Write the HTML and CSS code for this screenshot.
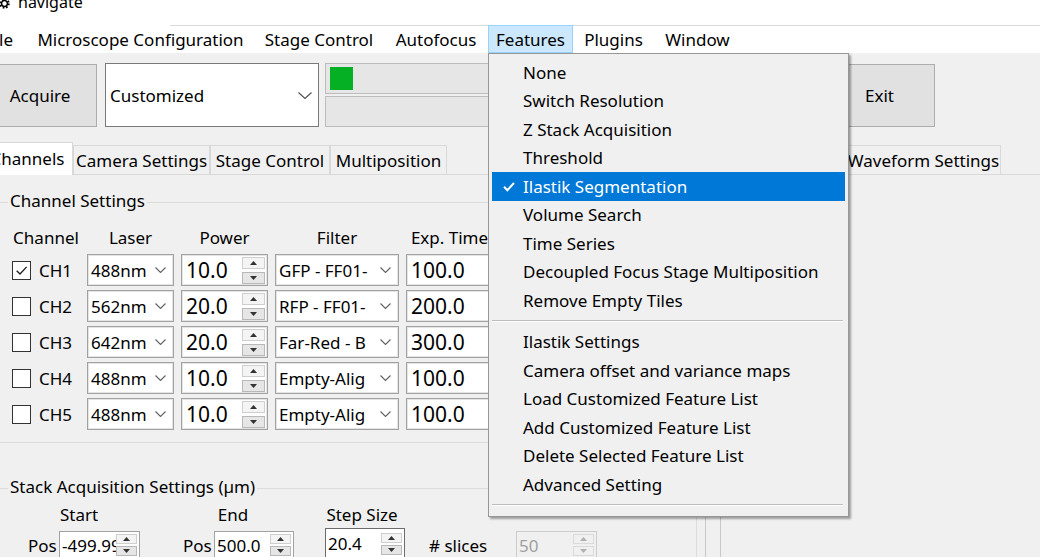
FILE: index.html
```html
<!DOCTYPE html>
<html lang="en">
<head>
<meta charset="utf-8">
<title>navigate</title>
<link rel="stylesheet" href="styles.css">
</head>
<body>
<header class="titlebar">
  <svg class="app-icon" viewBox="0 0 12 12" aria-hidden="true">
    <circle cx="6" cy="6" r="4.6" fill="none" stroke="#000" stroke-width="2.2" stroke-dasharray="1.8 1.8"/>
    <circle cx="6" cy="6" r="3.2" fill="none" stroke="#000" stroke-width="1.6"/>
  </svg>
  <span class="app-name">navigate</span>
</header>

<nav class="menubar">
  <span class="menu-title w-file">File</span>
  <span class="menu-title w-micro">Microscope Configuration</span>
  <span class="menu-title w-stage">Stage Control</span>
  <span class="menu-title w-auto">Autofocus</span>
  <span class="menu-title w-feat open">Features</span>
  <span class="menu-title w-plug">Plugins</span>
  <span class="menu-title w-win">Window</span>
</nav>

<section class="toolbar">
  <button class="btn btn-acquire">Acquire</button>
  <div class="combo combo-mode">
    <span class="combo-text">Customized</span>
    <svg class="chev chev-lg" viewBox="0 0 14 7" aria-hidden="true"><path d="M0.5 0.5 L7 6.5 L13.5 0.5" fill="none" stroke="#555" stroke-width="1.2"/></svg>
  </div>
  <div class="progress">
    <div class="pbar"><span class="pfill"></span></div>
    <div class="pbar"></div>
  </div>
  <button class="btn btn-exit">Exit</button>
</section>

<main class="workspace">
  <div class="notebook nb-left">
    <div class="tabs">
      <span class="tab selected w-channels">Channels</span>
      <span class="tab w-camset">Camera Settings</span>
      <span class="tab w-stagectl">Stage Control</span>
      <span class="tab w-multipos">Multiposition</span>
    </div>
    <div class="tab-body body-left">
      <div class="lframe frame-channels">
        <span class="lframe-label">Channel Settings</span>
        <div class="channel-grid">
          <span class="col-head">Channel</span>
          <span class="col-head">Laser</span>
          <span class="col-head">Power</span>
          <span class="col-head">Filter</span>
          <span class="col-head">Exp. Time</span>

          <span class="ch-label"><span class="checkbox"><svg viewBox="0 0 14 14" aria-hidden="true"><path d="M2.5 7.2 L5.6 10.3 L11.8 3.6" fill="none" stroke="#222" stroke-width="1.3"/></svg></span>CH1</span>
          <span class="combo"><span class="combo-text">488nm</span><svg class="chev" viewBox="0 0 11 6" aria-hidden="true"><path d="M0.5 0.5 L5.5 5.5 L10.5 0.5" fill="none" stroke="#606060" stroke-width="1.1"/></svg></span>
          <span class="spinbox"><span class="big">10.0</span><span class="spin"><span class="spin-btn up"><svg viewBox="0 0 7 4"><path d="M3.5 0 L7 4 L0 4Z"/></svg></span><span class="spin-btn"><svg viewBox="0 0 7 4"><path d="M0 0 L7 0 L3.5 4Z"/></svg></span></span></span>
          <span class="combo"><span class="combo-text">GFP - FF01-</span><svg class="chev" viewBox="0 0 11 6" aria-hidden="true"><path d="M0.5 0.5 L5.5 5.5 L10.5 0.5" fill="none" stroke="#606060" stroke-width="1.1"/></svg></span>
          <span class="entry"><span class="big">100.0</span></span>

          <span class="ch-label"><span class="checkbox"></span>CH2</span>
          <span class="combo"><span class="combo-text">562nm</span><svg class="chev" viewBox="0 0 11 6" aria-hidden="true"><path d="M0.5 0.5 L5.5 5.5 L10.5 0.5" fill="none" stroke="#606060" stroke-width="1.1"/></svg></span>
          <span class="spinbox"><span class="big">20.0</span><span class="spin"><span class="spin-btn up"><svg viewBox="0 0 7 4"><path d="M3.5 0 L7 4 L0 4Z"/></svg></span><span class="spin-btn"><svg viewBox="0 0 7 4"><path d="M0 0 L7 0 L3.5 4Z"/></svg></span></span></span>
          <span class="combo"><span class="combo-text">RFP - FF01-</span><svg class="chev" viewBox="0 0 11 6" aria-hidden="true"><path d="M0.5 0.5 L5.5 5.5 L10.5 0.5" fill="none" stroke="#606060" stroke-width="1.1"/></svg></span>
          <span class="entry"><span class="big">200.0</span></span>

          <span class="ch-label"><span class="checkbox"></span>CH3</span>
          <span class="combo"><span class="combo-text">642nm</span><svg class="chev" viewBox="0 0 11 6" aria-hidden="true"><path d="M0.5 0.5 L5.5 5.5 L10.5 0.5" fill="none" stroke="#606060" stroke-width="1.1"/></svg></span>
          <span class="spinbox"><span class="big">20.0</span><span class="spin"><span class="spin-btn up"><svg viewBox="0 0 7 4"><path d="M3.5 0 L7 4 L0 4Z"/></svg></span><span class="spin-btn"><svg viewBox="0 0 7 4"><path d="M0 0 L7 0 L3.5 4Z"/></svg></span></span></span>
          <span class="combo"><span class="combo-text">Far-Red - B</span><svg class="chev" viewBox="0 0 11 6" aria-hidden="true"><path d="M0.5 0.5 L5.5 5.5 L10.5 0.5" fill="none" stroke="#606060" stroke-width="1.1"/></svg></span>
          <span class="entry"><span class="big">300.0</span></span>

          <span class="ch-label"><span class="checkbox"></span>CH4</span>
          <span class="combo"><span class="combo-text">488nm</span><svg class="chev" viewBox="0 0 11 6" aria-hidden="true"><path d="M0.5 0.5 L5.5 5.5 L10.5 0.5" fill="none" stroke="#606060" stroke-width="1.1"/></svg></span>
          <span class="spinbox"><span class="big">10.0</span><span class="spin"><span class="spin-btn up"><svg viewBox="0 0 7 4"><path d="M3.5 0 L7 4 L0 4Z"/></svg></span><span class="spin-btn"><svg viewBox="0 0 7 4"><path d="M0 0 L7 0 L3.5 4Z"/></svg></span></span></span>
          <span class="combo"><span class="combo-text">Empty-Alig</span><svg class="chev" viewBox="0 0 11 6" aria-hidden="true"><path d="M0.5 0.5 L5.5 5.5 L10.5 0.5" fill="none" stroke="#606060" stroke-width="1.1"/></svg></span>
          <span class="entry"><span class="big">100.0</span></span>

          <span class="ch-label"><span class="checkbox"></span>CH5</span>
          <span class="combo"><span class="combo-text">488nm</span><svg class="chev" viewBox="0 0 11 6" aria-hidden="true"><path d="M0.5 0.5 L5.5 5.5 L10.5 0.5" fill="none" stroke="#606060" stroke-width="1.1"/></svg></span>
          <span class="spinbox"><span class="big">10.0</span><span class="spin"><span class="spin-btn up"><svg viewBox="0 0 7 4"><path d="M3.5 0 L7 4 L0 4Z"/></svg></span><span class="spin-btn"><svg viewBox="0 0 7 4"><path d="M0 0 L7 0 L3.5 4Z"/></svg></span></span></span>
          <span class="combo"><span class="combo-text">Empty-Alig</span><svg class="chev" viewBox="0 0 11 6" aria-hidden="true"><path d="M0.5 0.5 L5.5 5.5 L10.5 0.5" fill="none" stroke="#606060" stroke-width="1.1"/></svg></span>
          <span class="entry"><span class="big">100.0</span></span>
        </div>
      </div>

      <div class="lframe frame-stack">
        <span class="lframe-label">Stack Acquisition Settings (µm)</span>
        <div class="stack-grid">
          <span class="col-head head-start">Start</span>
          <span class="col-head head-end">End</span>
          <span class="col-head head-step">Step Size</span>
          <span></span>
          <span></span>

          <span class="pos-field"><span class="pos-label">Pos</span><span class="sentry w-start"><span class="sentry-text">-499.99</span><span class="spin small"><span class="spin-btn up"><svg viewBox="0 0 7 4"><path d="M3.5 0 L7 4 L0 4Z"/></svg></span><span class="spin-btn"><svg viewBox="0 0 7 4"><path d="M0 0 L7 0 L3.5 4Z"/></svg></span></span></span></span>
          <span class="pos-field"><span class="pos-label">Pos</span><span class="sentry w-end"><span class="sentry-text">500.0</span><span class="spin small"><span class="spin-btn up"><svg viewBox="0 0 7 4"><path d="M3.5 0 L7 4 L0 4Z"/></svg></span><span class="spin-btn"><svg viewBox="0 0 7 4"><path d="M0 0 L7 0 L3.5 4Z"/></svg></span></span></span></span>
          <span class="sentry w-step focused"><span class="sentry-text">20.4</span><span class="spin small"><span class="spin-btn up"><svg viewBox="0 0 7 4"><path d="M3.5 0 L7 4 L0 4Z"/></svg></span><span class="spin-btn"><svg viewBox="0 0 7 4"><path d="M0 0 L7 0 L3.5 4Z"/></svg></span></span></span>
          <span class="slices-label"># slices</span>
          <span class="sentry w-slices disabled"><span class="sentry-text">50</span><span class="spin small"><span class="spin-btn up"><svg viewBox="0 0 7 4"><path d="M3.5 0 L7 4 L0 4Z"/></svg></span><span class="spin-btn"><svg viewBox="0 0 7 4"><path d="M0 0 L7 0 L3.5 4Z"/></svg></span></span></span>
        </div>
      </div>
    </div>
  </div>

  <div class="notebook nb-right">
    <div class="tabs">
      <span class="tab w-camview">Camera View</span>
      <span class="tab w-wave">Waveform Settings</span>
    </div>
    <div class="tab-body body-right"></div>
  </div>
</main>

<div class="dropdown" role="menu">
  <div class="dd-item"><span class="dd-check"></span>None</div>
  <div class="dd-item"><span class="dd-check"></span>Switch Resolution</div>
  <div class="dd-item"><span class="dd-check"></span>Z Stack Acquisition</div>
  <div class="dd-item"><span class="dd-check"></span>Threshold</div>
  <div class="dd-item active"><span class="dd-check"><svg viewBox="0 0 12 11" aria-hidden="true"><path d="M1 5.8 L4.4 9.2 L11 2" fill="none" stroke="#fff" stroke-width="2"/></svg></span>Ilastik Segmentation</div>
  <div class="dd-item"><span class="dd-check"></span>Volume Search</div>
  <div class="dd-item"><span class="dd-check"></span>Time Series</div>
  <div class="dd-item"><span class="dd-check"></span>Decoupled Focus Stage Multiposition</div>
  <div class="dd-item"><span class="dd-check"></span>Remove Empty Tiles</div>
  <div class="dd-sep"></div>
  <div class="dd-item"><span class="dd-check"></span>Ilastik Settings</div>
  <div class="dd-item"><span class="dd-check"></span>Camera offset and variance maps</div>
  <div class="dd-item"><span class="dd-check"></span>Load Customized Feature List</div>
  <div class="dd-item"><span class="dd-check"></span>Add Customized Feature List</div>
  <div class="dd-item"><span class="dd-check"></span>Delete Selected Feature List</div>
  <div class="dd-item"><span class="dd-check"></span>Advanced Setting</div>
  <div class="dd-sep"></div>
</div>
</body>
</html>
```

FILE: styles.css
```css
* { box-sizing: border-box; }
html, body { margin: 0; padding: 0; }
body {
  width: 1040px;
  height: 557px;
  overflow: hidden;
  position: relative;
  background: #f0f0f0;
  font-family: "Noto Sans", "Open Sans", sans-serif;
  font-size: 17px;
  color: #000;
}
button { font: inherit; color: inherit; }

/* title bar */
.titlebar {
  height: 25px;
  background: #fff;
  display: flex;
  align-items: flex-start;
  overflow: hidden;
}
.app-icon { width: 11px; height: 11px; margin: -2px 0 0 -1px; flex: none; }
.app-name { font-size: 16px; line-height: 16px; margin: -6px 0 0 8px; }

/* menubar */
.menubar {
  display: flex;
  height: 28px;
  background: linear-gradient(#dadada, #dadada) 170px 0 / 100% 1px no-repeat, #fff;
}
.menu-title {
  display: flex;
  align-items: center;
  justify-content: center;
  height: 28px;
  flex: none;
  white-space: nowrap;
}
.menu-title.open { background: #cce8ff; border: 1px solid #99d1ff; }
.w-file { width: 55px; margin-left: -28px; }
.w-micro { width: 227px; }
.w-stage { width: 130px; }
.w-auto { width: 104px; }
.w-feat { width: 85px; }
.w-plug { width: 81px; }
.w-win { width: 87px; }

/* toolbar */
.toolbar { display: flex; align-items: center; height: 64px; margin-top: 10px; }
.btn {
  height: 63px;
  background: #e1e1e1;
  border: 1px solid #adadad;
  padding: 0;
  flex: none;
}
.btn-acquire { width: 111px; margin-left: -14px; padding-right: 3px; }
.btn-exit { width: 87px; margin-left: 8px; padding-right: 24px; }

.combo {
  display: flex;
  align-items: center;
  background: #fff;
  border: 1px solid #a2a2a2;
  box-shadow: inset 0 0 0 1px #e4e4e4;
  padding-left: 3px;
  overflow: hidden;
}
.combo-text { flex: 1; white-space: nowrap; overflow: hidden; }
.combo-mode {
  width: 214px;
  height: 64px;
  margin-left: 8px;
  border-color: #7a7a7a;
  box-shadow: none;
  padding-left: 4px;
  flex: none;
}
.chev { width: 11px; height: 6px; margin: 0 7px 0 4px; flex: none; }
.chev-lg { width: 14px; height: 7px; margin-right: 6px; }

.progress {
  width: 515px;
  height: 64px;
  margin-left: 6px;
  display: flex;
  flex-direction: column;
  gap: 2px;
  flex: none;
}
.pbar {
  flex: 1;
  background: #e6e6e6;
  border: 1px solid #bcbcbc;
  display: flex;
  align-items: center;
  padding-left: 4px;
}
.pfill { width: 23px; height: 23px; background: #06b025; }

/* notebooks */
.workspace { display: flex; margin-top: 15px; height: 415px; }
.notebook { display: flex; flex-direction: column; flex: none; }
.nb-left { width: 724px; margin-left: -18px; }
.nb-right { flex: 1; margin-left: 14px; }
.tabs {
  display: flex;
  align-items: flex-end;
  height: 33px;
  border-bottom: 1px solid #d9d9d9;
  flex: none;
}
.tab {
  display: flex;
  align-items: center;
  justify-content: center;
  height: 29px;
  border: 1px solid #d9d9d9;
  border-bottom: 0;
  background: #f0f0f0;
  white-space: nowrap;
  flex: none;
}
.tab.selected { height: 33px; margin-bottom: -1px; background: #fff; padding-bottom: 2px; }
.w-channels { width: 91px; }
.w-camset { width: 137px; }
.w-stagectl { width: 120px; }
.w-multipos { width: 117px; }
.w-camview { width: 126px; }
.w-wave { width: 155px; }

.tab-body { flex: 1; display: flex; flex-direction: column; }
.body-left { border-right: 1px solid #c8c8c8; }
.body-right { border-left: 1px solid #c8c8c8; }

/* label frames */
.lframe {
  border: 1px solid #dcdcdc;
  display: flex;
  flex-direction: column;
  align-items: flex-start;
}
.lframe-label {
  line-height: 20px;
  margin: -12px 0 0 -4px;
  padding: 0 2px;
  background: #f0f0f0;
  white-space: nowrap;
}
.frame-channels { margin: 27px 8px 0 4px; padding: 0 0 12px 25px; }
.frame-stack { margin: 45px 8px 0 4px; padding: 0 0 0 25px; flex: 1; border-bottom: 0; }

/* channel grid */
.channel-grid {
  display: grid;
  grid-template-columns: 68px 87px 87px 124px 87px;
  grid-template-rows: 25px repeat(5, 32px);
  gap: 4px 7px;
  margin-top: 14px;
}
.col-head { text-align: center; white-space: nowrap; align-self: center; }
.ch-label { display: flex; align-items: center; gap: 8px; }
.checkbox {
  width: 19px;
  height: 19px;
  border: 1px solid #333;
  background: #fff;
  display: flex;
  align-items: center;
  justify-content: center;
  flex: none;
}
.checkbox svg { width: 15px; height: 15px; }

.spinbox, .entry {
  display: flex;
  align-items: center;
  background: #fff;
  border: 1px solid #a2a2a2;
  box-shadow: inset 0 0 0 1px #e4e4e4;
  padding-left: 4px;
  overflow: hidden;
}
.big { font-size: 21px; white-space: nowrap; }
.spin {
  display: flex;
  flex-direction: column;
  gap: 3px;
  width: 23px;
  margin: 0 2px 0 auto;
  flex: none;
}
.spin-btn {
  height: 12px;
  display: flex;
  align-items: center;
  justify-content: center;
  background: #e6e6e6;
  border: 1px solid #b8b8b8;
}
.spin-btn.up { background: #f4f4f4; border-color: #cfcfcf; }
.spin-btn svg { width: 7px; height: 4px; fill: #333; }
.spin.small { width: 21px; gap: 2px; }
.spin.small .spin-btn { height: 10px; }

/* stack grid */
.stack-grid {
  display: grid;
  grid-template-columns: 155px 142px 104px 87px 81px;
  grid-template-rows: 22px 28px;
  row-gap: 6px;
  margin: 6px 0 0 16px;
}
.head-start { width: 102px; }
.head-end { width: 100px; }
.head-step { width: 74px; }
.pos-field { display: flex; align-items: center; gap: 3px; }
.pos-label { width: 28px; }
.sentry {
  display: flex;
  align-items: center;
  height: 28px;
  background: #fff;
  border: 1px solid #a2a2a2;
  padding-left: 2px;
  overflow: hidden;
}
.sentry-text { flex: 1; white-space: nowrap; overflow: hidden; }
.w-start { width: 81px; }
.w-end { width: 80px; }
.w-step { width: 80px; height: 31px; align-self: end; border-color: #6c6c6c; }
.w-slices { width: 81px; }
.sentry.disabled { background: #f0f0f0; border-color: #cccccc; color: #a0a0a0; }
.sentry.disabled .spin-btn { background: #f0f0f0; border-color: #dadada; }
.sentry.disabled .spin-btn svg { fill: #b0b0b0; }
.slices-label { align-self: center; white-space: nowrap; }

/* dropdown menu */
.dropdown {
  position: absolute;
  left: 488px;
  top: 53px;
  width: 361px;
  height: 464px;
  background: #f0f0f0;
  border: 1px solid #979797;
  box-shadow: 2px 2px 2px rgba(0, 0, 0, 0.35);
  padding: 4px 3px 0 3px;
}
.dd-item {
  display: flex;
  align-items: center;
  height: 28.5px;
  white-space: nowrap;
}
.dd-item.active { background: #0078d7; color: #fff; }
.dd-check {
  width: 12px;
  height: 11px;
  margin: 0 8px 0 11px;
  display: flex;
  flex: none;
}
.dd-check svg { width: 12px; height: 11px; }
.dd-sep {
  height: 13px;
  padding-top: 5px;
  margin-right: 2px;
}
.dd-sep::before {
  content: "";
  display: block;
  border-top: 1px solid #bdbdbd;
  border-bottom: 1px solid #fff;
}
```
